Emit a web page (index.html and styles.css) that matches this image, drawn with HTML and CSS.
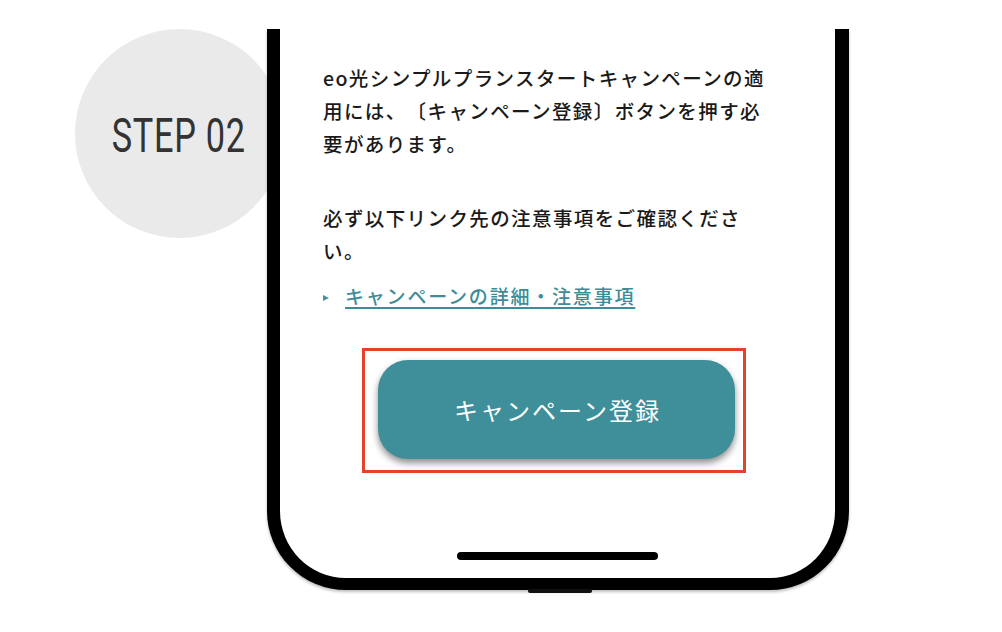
FILE: index.html
```html
<!DOCTYPE html>
<html lang="ja">
<head>
<meta charset="utf-8">
<title>STEP 02</title>
<link rel="stylesheet" href="styles.css">
</head>
<body>
<div class="stage">
  <div class="step"><span class="step-label">STEP 02</span></div>
  <div class="phone">
    <div class="screen">
      <p class="copy">eo光シンプルプランスタートキャンペーンの適<br>用には、〔キャンペーン登録〕ボタンを押す必<br>要があります。</p>
      <p class="copy copy-second">必ず以下リンク先の注意事項をご確認くださ<br>い。</p>
      <p class="link-row"><span class="arrow"></span><a class="link" href="#">キャンペーンの詳細・注意事項</a></p>
      <div class="highlight">
        <div class="btn">キャンペーン登録</div>
      </div>
      <div class="home-bar"></div>
    </div>
  </div>
</div>
</body>
</html>
```

FILE: styles.css
```css
* { box-sizing: border-box; }
html, body { margin: 0; padding: 0; background: #fff; }
body {
  width: 1002px;
  height: 632px;
  overflow: hidden;
  font-family: "Noto Sans CJK JP", "Noto Sans", sans-serif;
  text-spacing-trim: space-all;
}
.stage {
  display: flex;
  align-items: flex-start;
  padding-top: 29px;
}
.step {
  flex: 0 0 auto;
  width: 209px;
  height: 209px;
  margin-left: 75px;
  border-radius: 50%;
  background: #eaeaea;
  display: flex;
  align-items: center;
  justify-content: center;
}
.step-label {
  display: inline-block;
  font-family: Roboto, "Liberation Sans", sans-serif;
  font-weight: 400;
  font-size: 49px;
  line-height: 1;
  color: #333;
  letter-spacing: 1px;
  white-space: nowrap;
  transform: scaleX(0.70);
  margin: 4px 0 0 -2px;
}
.phone {
  position: relative;
  z-index: 1;
  flex: 0 0 auto;
  width: 582px;
  height: 561px;
  margin-left: -17px;
  border: solid #000;
  border-width: 0 14px 12px 13px;
  border-radius: 0 0 79px 79px;
  background: #fff;
  box-shadow: 0 2px 3px rgba(0,0,0,0.25);
}
.phone::after {
  content: "";
  position: absolute;
  left: 248px;
  bottom: -15px;
  width: 64px;
  height: 4px;
  background: #111;
  border-radius: 0 0 2px 2px;
}
.screen {
  height: 100%;
  display: flex;
  flex-direction: column;
  align-items: flex-start;
  padding: 32px 0 0 43px;
}
.copy {
  margin: 0;
  font-size: 19.5px;
  font-weight: 500;
  line-height: 33px;
  letter-spacing: 1.4px;
  color: #1a1a1a;
  white-space: nowrap;
}
.copy-second { margin-top: 41px; }
.link-row {
  margin: 12px 0 0 0;
  display: flex;
  align-items: center;
  font-size: 19px;
  font-weight: 500;
  line-height: 33px;
  letter-spacing: 1.8px;
  white-space: nowrap;
}
.arrow {
  width: 0;
  height: 0;
  border-style: solid;
  border-width: 3.5px 0 3.5px 6px;
  border-color: transparent transparent transparent #4c8f99;
  margin: 4px 16px 0 0;
}
.link {
  color: #3e8c98;
  text-decoration: underline;
  text-underline-offset: 3px;
  text-decoration-thickness: 1.5px;
}
.highlight {
  margin: 36px 0 0 39px;
  width: 384px;
  height: 125px;
  border: 3px solid #e6412b;
  padding: 9px 8px 11px 13px;
}
.btn {
  width: 100%;
  height: 100%;
  border-radius: 30px;
  background: #3f8f9a;
  color: #fff;
  font-size: 24px;
  font-weight: 400;
  letter-spacing: 2px;
  display: flex;
  align-items: center;
  justify-content: center;
  padding-left: 2px;
  box-shadow: 0 4px 7px rgba(0,0,0,0.45);
}
.home-bar {
  margin-top: auto;
  margin-bottom: 18px;
  align-self: center;
  margin-left: -43px;
  width: 201px;
  height: 8px;
  border-radius: 4px;
  background: #000;
}
```
